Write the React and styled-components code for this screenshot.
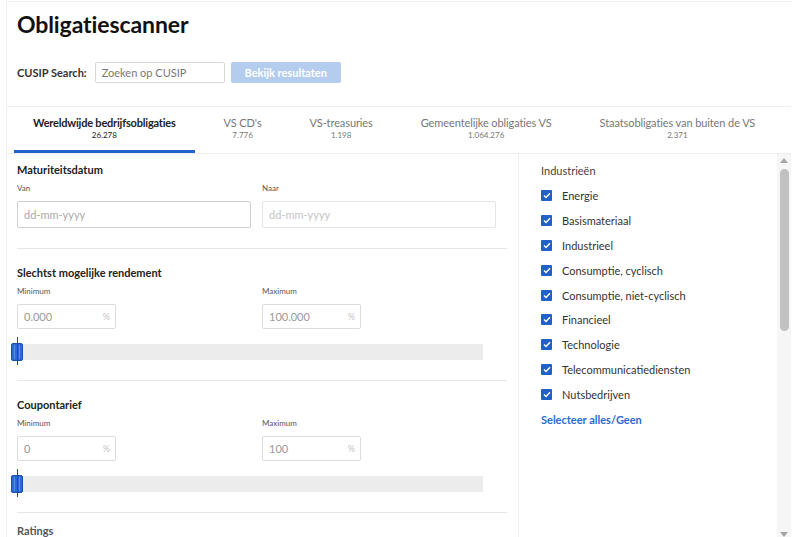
import React from 'react'
import styled, { createGlobalStyle } from 'styled-components'

const GlobalStyle = createGlobalStyle`
  body {
    margin: 0;
    background: #fff;
    font-family: Lato, "Noto Sans", sans-serif;
    color: #222;
  }
`

const Page = styled.div`
  margin: 1px 0 0 6px;
  width: 784px;
  height: 536px;
  border-top: 1px solid #eee;
  border-left: 1px solid #eee;
  overflow: hidden;
  display: flex;
  flex-direction: column;
`

const Header = styled.div`
  padding: 7px 10px 0;
  height: 97px;
  border-bottom: 1px solid #eee;
`

const Title = styled.h1`
  margin: 0;
  font-size: 23px;
  line-height: 30px;
  font-weight: 700;
  letter-spacing: -0.1px;
  color: #111;
`

const SearchRow = styled.div`
  display: flex;
  align-items: center;
  margin-top: 23px;
`

const SearchLabel = styled.span`
  font-size: 11px;
  font-weight: 700;
  color: #333;
  margin-right: 8px;
`

const SearchInput = styled.div`
  width: 122px;
  height: 19px;
  border: 1px solid #d8d8d8;
  border-radius: 2px;
  padding-left: 6px;
  font-size: 11px;
  line-height: 19px;
  color: #777;
  margin-right: 6px;
`

const Button = styled.div`
  width: 110px;
  height: 21px;
  border-radius: 2px;
  background: #b4cdef;
  color: #fff;
  font-size: 11px;
  font-weight: 700;
  line-height: 21px;
  text-align: center;
`

const Tabs = styled.div`
  display: flex;
  gap: 10px;
  padding-left: 7px;
  height: 46px;
  border-bottom: 1px solid #eee;
`

const Tab = styled.div`
  padding: 0 19px;
  display: flex;
  flex-direction: column;
  align-items: center;
  padding-top: 9px;
  border-bottom: 3px solid ${p => (p.$active ? '#2263c9' : 'transparent')};
  color: ${p => (p.$active ? '#222' : '#777')};
`

const TabName = styled.div`
  font-size: 11px;
  line-height: 14px;
  font-weight: ${p => (p.$active ? 700 : 400)};
  letter-spacing: ${p => (p.$active ? '-0.2px' : '-0.1px')};
`

const TabCount = styled.div`
  font-size: 8px;
  line-height: 10px;
`

const Body = styled.div`
  flex: 1;
  display: flex;
  min-height: 0;
`

const Filters = styled.div`
  width: 490px;
  padding: 0 11px 0 10px;
  border-right: 1px solid #eee;
`

const Section = styled.div`
  padding: ${p => (p.$first ? '9px 0 20px' : p.$last ? '11px 0 0' : '17px 0 20px')};
  border-bottom: ${p => (p.$last ? 'none' : '1px solid #e6e6e6')};
`

const SectionTitle = styled.div`
  font-size: 11px;
  line-height: 14px;
  font-weight: 700;
  color: ${p => (p.$muted ? '#555' : '#222')};
`

const Fields = styled.div`
  display: grid;
  grid-template-columns: 245px 245px;
  margin-top: 6px;
`

const FieldLabel = styled.div`
  font-size: 8px;
  line-height: 11px;
  color: #555;
  margin-bottom: 7px;
`

const DateInput = styled.div`
  width: 226px;
  height: 25px;
  border: 1px solid ${p => (p.$disabled ? '#e4e4e4' : '#cfcfcf')};
  border-radius: 2px;
  padding-left: 6px;
  font-size: 11px;
  line-height: 25px;
  color: ${p => (p.$disabled ? '#c4c4c4' : '#a9a9a9')};
`

const NumInput = styled.div`
  width: 86px;
  height: 23px;
  border: 1px solid #dcdcdc;
  border-radius: 2px;
  padding: 0 5px 0 6px;
  display: flex;
  justify-content: space-between;
  font-size: 11px;
  line-height: 23px;
  color: #999;
`

const Unit = styled.span`
  font-size: 9px;
  color: #c4c4c4;
`

const Track = styled.div`
  position: relative;
  margin: 15px 0 0 -6px;
  width: 472px;
  height: 16px;
  background: #ececec;
`

const Handle = styled.div`
  position: absolute;
  left: 0;
  top: -1px;
  width: 10px;
  height: 16px;
  border: 1px solid #1b4fa8;
  border-radius: 2px;
  background: #2b6ad6;
  &::before {
    content: '';
    position: absolute;
    left: 2px;
    top: 1px;
    width: 4px;
    height: 14px;
    border-left: 1px solid #5b8fe6;
    border-right: 1px solid #5b8fe6;
  }
  &::after {
    content: '';
    position: absolute;
    left: 5px;
    top: -7px;
    width: 1px;
    height: 28px;
    background: #1a4ea6;
  }
`

const Side = styled.div`
  flex: 1;
  display: flex;
`

const SideContent = styled.div`
  flex: 1;
  padding: 10px 0 0 22px;
`

const SideTitle = styled.div`
  font-size: 11px;
  line-height: 14px;
  color: #444;
  margin-bottom: 5px;
`

const CheckRow = styled.label`
  display: flex;
  align-items: center;
  height: 24.9px;
  font-size: 11px;
  color: #333;
`

const Box = styled.span`
  width: 11px;
  height: 11px;
  border-radius: 1px;
  background: #2160c6;
  margin-right: 10px;
  display: flex;
  align-items: center;
  justify-content: center;
`

const Link = styled.div`
  margin-top: 6px;
  font-size: 11px;
  font-weight: 700;
  color: #2a6ad2;
`

const Scrollbar = styled.div`
  width: 14px;
  background: #f6f6f6;
  display: flex;
  flex-direction: column;
  align-items: center;
  padding-top: 4px;
`

const Arrow = styled.div`
  width: 0;
  height: 0;
  border-left: 4px solid transparent;
  border-right: 4px solid transparent;
  ${p => (p.$down
    ? 'border-top: 5px solid #a6a6a6; margin-top: auto; margin-bottom: 1px;'
    : 'border-bottom: 5px solid #a6a6a6;')}
`

const Thumb = styled.div`
  width: 9px;
  height: 162px;
  margin-top: 6px;
  border-radius: 5px;
  background: #c1c1c1;
`

const tabs = [
  ['Wereldwijde bedrijfsobligaties', '26.278'],
  ["VS CD's", '7.776'],
  ['VS-treasuries', '1.198'],
  ['Gemeentelijke obligaties VS', '1.064.276'],
  ['Staatsobligaties van buiten de VS', '2.371'],
]

const industries = [
  'Energie',
  'Basismateriaal',
  'Industrieel',
  'Consumptie, cyclisch',
  'Consumptie, niet-cyclisch',
  'Financieel',
  'Technologie',
  'Telecommunicatiediensten',
  'Nutsbedrijven',
]

const Check = () => (
  <svg width="8" height="7" viewBox="0 0 8 7">
    <path d="M1 3.6 L3 5.4 L7 1.2" fill="none" stroke="#fff" strokeWidth="1.4" />
  </svg>
)

const RangeSection = ({ title, min, max }) => (
  <Section>
    <SectionTitle>{title}</SectionTitle>
    <Fields>
      <div>
        <FieldLabel>Minimum</FieldLabel>
        <NumInput>{min}<Unit>%</Unit></NumInput>
      </div>
      <div>
        <FieldLabel>Maximum</FieldLabel>
        <NumInput>{max}<Unit>%</Unit></NumInput>
      </div>
    </Fields>
    <Track><Handle /></Track>
  </Section>
)

const App = () => (
  <>
    <GlobalStyle />
    <Page>
      <Header>
        <Title>Obligatiescanner</Title>
        <SearchRow>
          <SearchLabel>CUSIP Search:</SearchLabel>
          <SearchInput>Zoeken op CUSIP</SearchInput>
          <Button>Bekijk resultaten</Button>
        </SearchRow>
      </Header>
      <Tabs>
        {tabs.map(([name, count], i) => (
          <Tab key={name} $active={i === 0}>
            <TabName $active={i === 0}>{name}</TabName>
            <TabCount>{count}</TabCount>
          </Tab>
        ))}
      </Tabs>
      <Body>
        <Filters>
          <Section $first>
            <SectionTitle>Maturiteitsdatum</SectionTitle>
            <Fields>
              <div>
                <FieldLabel>Van</FieldLabel>
                <DateInput>dd-mm-yyyy</DateInput>
              </div>
              <div>
                <FieldLabel>Naar</FieldLabel>
                <DateInput $disabled>dd-mm-yyyy</DateInput>
              </div>
            </Fields>
          </Section>
          <RangeSection title="Slechtst mogelijke rendement" min="0.000" max="100.000" />
          <RangeSection title="Coupontarief" min="0" max="100" />
          <Section $last>
            <SectionTitle $muted>Ratings</SectionTitle>
          </Section>
        </Filters>
        <Side>
          <SideContent>
            <SideTitle>Industrieën</SideTitle>
            {industries.map(name => (
              <CheckRow key={name}>
                <Box><Check /></Box>
                {name}
              </CheckRow>
            ))}
            <Link>Selecteer alles/Geen</Link>
          </SideContent>
          <Scrollbar>
            <Arrow />
            <Thumb />
            <Arrow $down />
          </Scrollbar>
        </Side>
      </Body>
    </Page>
  </>
)

export default App
